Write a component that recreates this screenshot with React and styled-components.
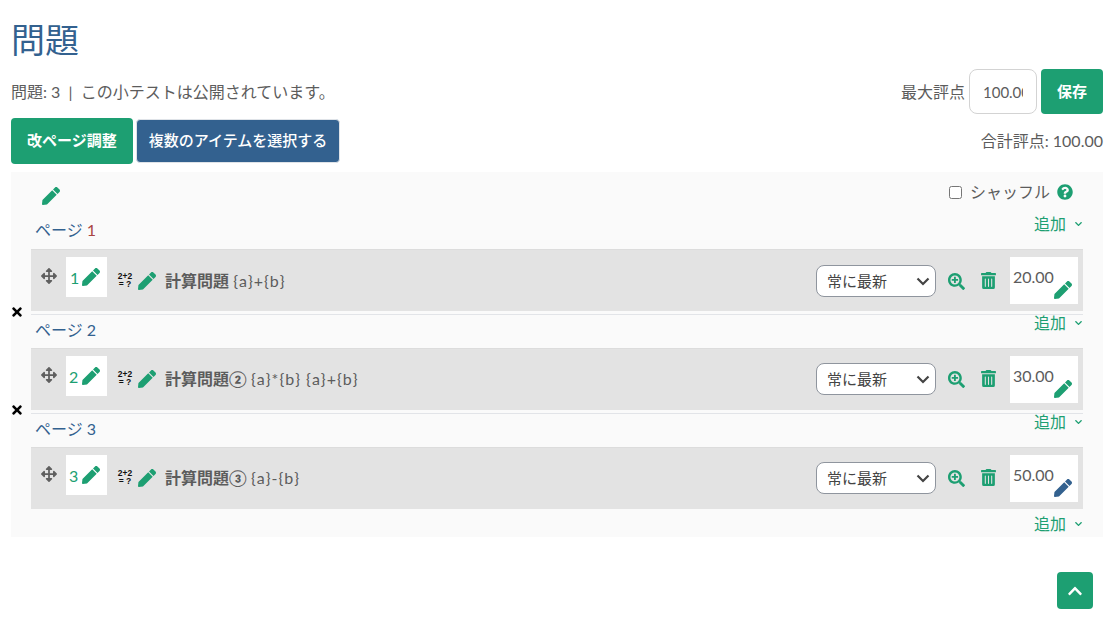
import React from 'react';
import styled, { createGlobalStyle } from 'styled-components';
import { FaPen, FaArrowsAlt, FaSearchPlus, FaTrashAlt, FaTimes, FaQuestionCircle, FaChevronUp, FaChevronDown } from 'react-icons/fa';

const green = '#1d9f72';
const blue = '#33618f';
const fontStack = `Lato, "Noto Sans CJK JP", sans-serif`;
const chevron = `url("data:image/svg+xml;utf8,<svg xmlns='http://www.w3.org/2000/svg' width='14' height='9' viewBox='0 0 14 9'><path d='M1.5 1.5 7 7l5.5-5.5' fill='none' stroke='%23444' stroke-width='2.2'/></svg>")`;

const GlobalStyle = createGlobalStyle`
  html, body {
    margin: 0;
    padding: 0;
    background: #ffffff;
    color: #5c5c5c;
    font-family: ${fontStack};
    font-size: 16px;
    overflow: hidden;
  }
  * { box-sizing: border-box; }
`;

const Page = styled.div`
  position: relative;
  width: 1119px;
  height: 630px;
  padding: 20px 16px 0 11px;
`;

const Title = styled.h2`
  margin: 0;
  height: 40px;
  color: ${blue};
  font-size: 34px;
  font-weight: 400;
  line-height: 40px;
`;

const StatusRow = styled.div`
  display: flex;
  justify-content: space-between;
  align-items: center;
  height: 45px;
  margin-top: 9px;
`;

const StatusText = styled.div`
  margin-bottom: 2px;
  font-size: 16px;
`;

const MaxGrade = styled.div`
  display: flex;
  align-items: center;
  gap: 4px;
`;

const GradeLabel = styled.span`
  margin-bottom: 2px;
`;

const GradeInput = styled.input`
  width: 68px;
  height: 45px;
  padding: 0 13px;
  border: 1px solid #d3d3d3;
  border-radius: 8px;
  background: #fff;
  color: #5c5c5c;
  font-family: ${fontStack};
  font-size: 15px;
  outline: none;
`;

const Button = styled.button`
  height: ${p => p.$h || 45}px;
  padding: 0 ${p => p.$px || 16}px 3px;
  border: ${p => (p.$blue ? '1px solid #dfe3e8' : '0')};
  border-radius: 4px;
  background: ${p => (p.$blue ? blue : green)};
  color: #fff;
  font-family: ${fontStack};
  font-size: 15px;
  font-weight: ${p => (p.$blue ? 500 : 700)};
  white-space: nowrap;
`;

const ActionRow = styled.div`
  display: flex;
  justify-content: space-between;
  align-items: flex-start;
  height: 46px;
  margin-top: 4px;
`;

const ActionButtons = styled.div`
  display: flex;
  align-items: center;
  gap: 3px;
`;

const TotalGrade = styled.div`
  margin-top: 10px;
  font-size: 16px;
`;

const Panel = styled.div`
  margin-top: 8px;
  height: 365px;
  padding: 0 20px;
  background: #fafafa;
`;

const PanelTop = styled.div`
  display: flex;
  justify-content: space-between;
  height: 37px;
  padding: 15px 10px 0 11px;
`;

const Pen = styled(FaPen)`
  flex: none;
  width: ${p => p.$size || 18}px;
  height: ${p => p.$size || 18}px;
  color: ${p => (p.$blue ? blue : green)};
`;

const Shuffle = styled.label`
  display: flex;
  align-items: center;
  height: 14px;
  margin-top: -2px;
  gap: 8px;
  font-size: 16px;
`;

const ShuffleBox = styled.input`
  width: 13px;
  height: 13px;
  margin: 0;
`;

const ShuffleText = styled.span`
  margin-bottom: 3px;
`;

const Help = styled(FaQuestionCircle)`
  width: 16px;
  height: 16px;
  margin-left: -1px;
  color: ${green};
`;

const PageHead = styled.div`
  display: flex;
  justify-content: space-between;
  height: ${p => p.$h}px;
  align-items: flex-start;
  padding-left: 4px;
`;

const PageLabel = styled.span`
  margin-top: ${p => p.$mt || 0}px;
  color: ${blue};
  font-size: 16px;
  line-height: 20px;
  em {
    color: ${p => (p.$flag ? '#a94442' : blue)};
    font-style: normal;
  }
`;

const AddMenu = styled.span`
  display: flex;
  align-items: center;
  gap: 8px;
  margin-top: ${p => p.$mt || 0}px;
  color: ${green};
  font-size: 16px;
  line-height: 20px;
`;

const AddCaret = styled(FaChevronDown)`
  width: 9px;
  height: 8px;
`;

const QuestionRow = styled.div`
  --nudge: ${p => (p.$up ? '-1px' : '0px')};
  display: flex;
  align-items: flex-start;
  height: 62px;
  padding: 7px 5px 0 10px;
  background: #e3e3e3;
  border-top: 1px solid #dcdcdc;
`;

const Move = styled(FaArrowsAlt)`
  flex: none;
  width: 16px;
  height: 16px;
  margin-top: 11px;
  color: #5f5f5f;
`;

const SlotBox = styled.div`
  display: flex;
  align-items: flex-start;
  gap: ${p => p.$gap}px;
  width: 41px;
  height: 40px;
  margin-left: 9px;
  padding: 11px 0 0 ${p => p.$pad}px;
  background: #fff;
  color: ${green};
  font-size: 16px;
  line-height: 20px;
`;

const TypeIconSvg = styled.svg`
  flex: none;
  width: 16px;
  height: 16px;
  margin: calc(15px + var(--nudge)) 0 0 10px;
  fill: #111;
  font-family: "Liberation Sans", sans-serif;
  font-size: 8.5px;
  font-weight: 700;
`;

const QuestionPen = styled(Pen)`
  margin: calc(15px + var(--nudge)) 0 0 5px;
`;

const QuestionName = styled.div`
  flex: 1;
  margin: calc(14px + var(--nudge)) 0 0 9px;
  font-size: 16px;
  line-height: 20px;
  b { font-weight: 700; }
`;

const QuestionText = styled.span`
  letter-spacing: 1px;
`;

const Versions = styled.select`
  appearance: none;
  width: 120px;
  height: 32px;
  margin-top: calc(8px + var(--nudge));
  padding: 0 10px;
  border: 1px solid #8f959e;
  border-radius: 8px;
  background: #fff ${chevron} no-repeat right 5px center;
  color: #444;
  font-family: ${fontStack};
  font-size: 15px;
`;

const Preview = styled(FaSearchPlus)`
  width: 17px;
  height: 17px;
  margin: calc(16px + var(--nudge)) 0 0 12px;
  color: ${green};
`;

const Trash = styled(FaTrashAlt)`
  width: 15px;
  height: 17px;
  margin: calc(15px + var(--nudge)) 0 0 16px;
  color: ${green};
`;

const MarkBox = styled.div`
  display: flex;
  flex-direction: column;
  width: 68px;
  height: 47px;
  margin-left: 14px;
  padding: 10px 6px 0 3px;
  background: #fff;
  font-size: 16px;
  line-height: 20px;
`;

const MarkPen = styled(Pen)`
  align-self: flex-end;
  margin-top: -6px;
`;

const Divider = styled.div`
  height: 1px;
  margin-top: 3px;
  background: #e2e4e8;
`;

const RemoveBreak = styled(FaTimes)`
  position: absolute;
  left: 11px;
  top: ${p => p.$top}px;
  width: 12px;
  height: 14px;
  color: #000;
`;

const BackToTop = styled.button`
  position: absolute;
  left: 1057px;
  top: 572px;
  display: flex;
  align-items: center;
  justify-content: center;
  width: 36px;
  height: 37px;
  padding: 0;
  border: 0;
  border-radius: 4px;
  background: ${green};
  color: #fff;
`;

const questions = [
  { n: 1, name: '計算問題', rest: '{a}+{b}', mark: '20.00', pad: 4, gap: 3 },
  { n: 2, name: '計算問題②', rest: '{a}*{b} {a}+{b}', mark: '30.00', pad: 3, gap: 4, up: true },
  { n: 3, name: '計算問題③', rest: '{a}-{b}', mark: '50.00', pad: 3, gap: 4, up: true, bluePen: true },
];

function Question({ q }) {
  return (
    <QuestionRow $up={q.up}>
      <Move />
      <SlotBox $pad={q.pad} $gap={q.gap}>
        {q.n}
        <Pen />
      </SlotBox>
      <TypeIconSvg viewBox="0 0 16 16" aria-hidden="true">
        <text x="8" y="7" textAnchor="middle">2+2</text>
        <text x="8" y="15" textAnchor="middle">= ?</text>
      </TypeIconSvg>
      <QuestionPen />
      <QuestionName>
        <b>{q.name}</b> <QuestionText>{q.rest}</QuestionText>
      </QuestionName>
      <Versions defaultValue="latest">
        <option value="latest">常に最新</option>
      </Versions>
      <Preview />
      <Trash />
      <MarkBox>
        {q.mark}
        <MarkPen $blue={q.bluePen} />
      </MarkBox>
    </QuestionRow>
  );
}

export default function App() {
  return (
    <Page>
      <GlobalStyle />
      <Title>問題</Title>
      <StatusRow>
        <StatusText>問題: 3 &nbsp;|&nbsp; この小テストは公開されています。</StatusText>
        <MaxGrade>
          <GradeLabel>最大評点</GradeLabel>
          <GradeInput readOnly defaultValue="100.00" />
          <Button>保存</Button>
        </MaxGrade>
      </StatusRow>
      <ActionRow>
        <ActionButtons>
          <Button $h={46}>改ページ調整</Button>
          <Button $blue $h={44} $px={12}>複数のアイテムを選択する</Button>
        </ActionButtons>
        <TotalGrade>合計評点: 100.00</TotalGrade>
      </ActionRow>
      <Panel>
        <PanelTop>
          <Pen />
          <Shuffle>
            <ShuffleBox type="checkbox" />
            <ShuffleText>シャッフル</ShuffleText>
            <Help />
          </Shuffle>
        </PanelTop>
        <PageHead $h={40}>
          <PageLabel $flag $mt={11}>ページ <em>1</em></PageLabel>
          <AddMenu $mt={5}>追加 <AddCaret /></AddMenu>
        </PageHead>
        <Question q={questions[0]} />
        <Divider />
        <PageHead $h={33}>
          <PageLabel $mt={5}>ページ 2</PageLabel>
          <AddMenu $mt={-2}>追加 <AddCaret /></AddMenu>
        </PageHead>
        <Question q={questions[1]} />
        <Divider />
        <PageHead $h={33}>
          <PageLabel $mt={5}>ページ 3</PageLabel>
          <AddMenu $mt={-2}>追加 <AddCaret /></AddMenu>
        </PageHead>
        <Question q={questions[2]} />
        <PageHead $h={28}>
          <span />
          <AddMenu $mt={5}>追加 <AddCaret /></AddMenu>
        </PageHead>
      </Panel>
      <RemoveBreak $top={305} />
      <RemoveBreak $top={403} />
      <BackToTop aria-label="top">
        <FaChevronUp size={16} />
      </BackToTop>
    </Page>
  );
}
